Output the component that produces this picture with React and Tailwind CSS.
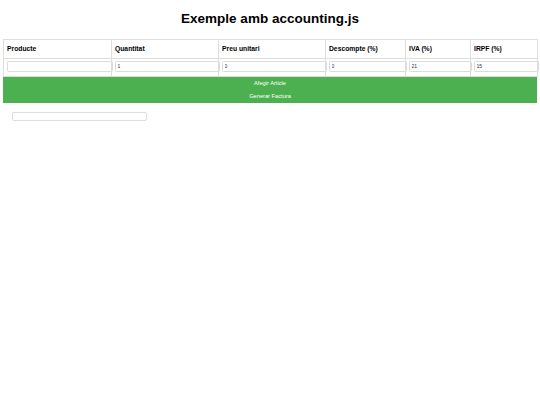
import React from 'react';

const columns = [
  { label: 'Producte', width: 'w-[108px]', value: '' },
  { label: 'Quantitat', width: 'w-[107px]', value: '1' },
  { label: 'Preu unitari', width: 'w-[107px]', value: '0' },
  { label: 'Descompte (%)', width: 'w-[80px]', value: '0' },
  { label: 'IVA (%)', width: 'w-[65px]', value: '21' },
  { label: 'IRPF (%)', width: 'w-[67px]', value: '15' }
];

const App = () => {
  return (
    <div className="min-h-screen bg-white px-[3px] pt-[11px] text-black" style={{ fontFamily: '"Liberation Sans", Arial, sans-serif' }}>
      <h1 className="text-center text-[13.5px] leading-[16px] font-bold">Exemple amb accounting.js</h1>

      <table className="mt-[12px] w-[534px] table-fixed border-collapse">
        <thead>
          <tr>
            {columns.map(col => (
              <th
                key={col.label}
                className={`${col.width} h-[19px] border border-[#dddddd] px-[3px] text-left align-middle text-[6.75px] leading-[8px] font-bold`}
              >
                {col.label}
              </th>
            ))}
          </tr>
        </thead>
        <tbody>
          <tr>
            {columns.map(col => (
              <td key={col.label} className="h-[18px] border border-[#dddddd] border-t-[#f0f0f0] px-[3px] pt-[2px] pb-[4px] align-top">
                <input
                  defaultValue={col.value}
                  className="box-content block h-[9px] w-full rounded-[1.5px] border border-[#dcdcdc] bg-white px-[1.5px] text-[5px] leading-[9px] text-[#333] outline-none"
                />
              </td>
            ))}
          </tr>
        </tbody>
      </table>

      <button className="block h-[13px] w-[534px] bg-[#4caf50] text-center text-[5.7px] leading-[13px] text-white">
        Afegir Article
      </button>
      <button className="block h-[13px] w-[534px] bg-[#4caf50] text-center text-[5.7px] leading-[13px] text-white">
        Generar Factura
      </button>

      <input className="mt-[9px] ml-[9px] block h-[9px] w-[135px] rounded-[2px] border border-[#dddddd] bg-white outline-none" />
    </div>
  );
};

export default App;
